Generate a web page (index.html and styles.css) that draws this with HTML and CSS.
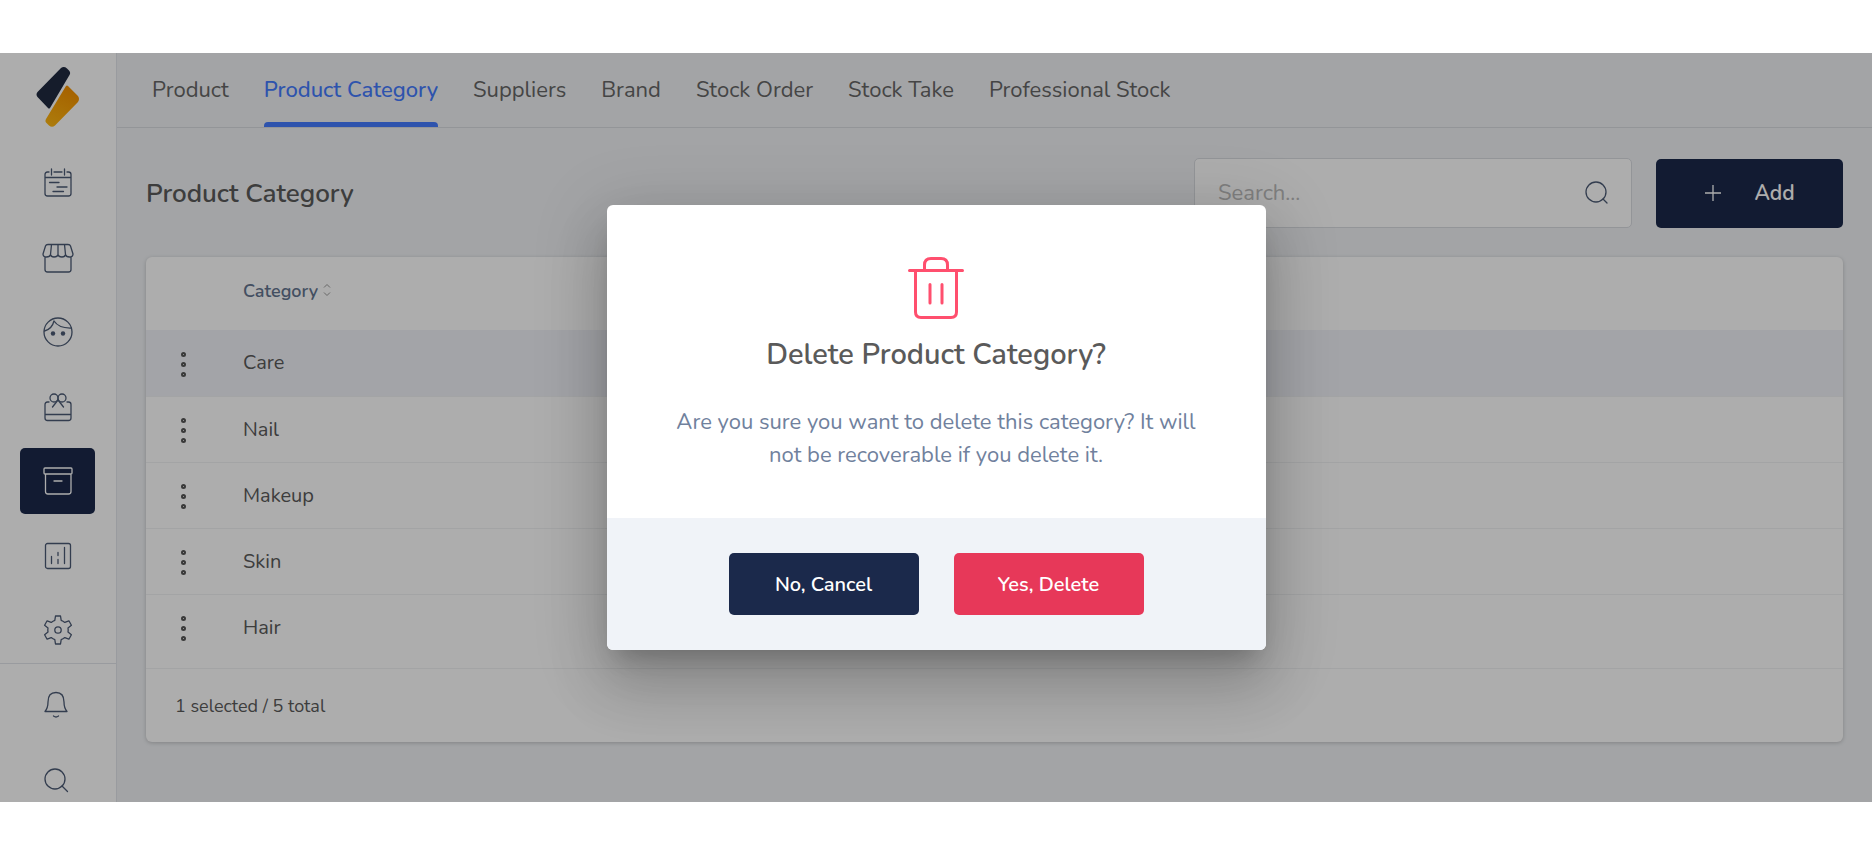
FILE: index.html
```html
<!DOCTYPE html>
<html lang="en">
<head>
    <meta charset="UTF-8">
    <meta name="viewport" content="width=device-width, initial-scale=1.0">
    <title>Product Category</title>
    <link rel="stylesheet" href="styles.css">
</head>
<body>
    <div class="app">
        <aside class="sidebar">
            <a href="#" class="logo" aria-label="Home">
                <svg width="44" height="62" viewBox="0 0 44 62">
                    <defs>
                        <linearGradient id="logoGold" x1="0" y1="1" x2="0.4" y2="0">
                            <stop offset="0" stop-color="#ffb914"/>
                            <stop offset="1" stop-color="#f59300"/>
                        </linearGradient>
                    </defs>
                    <path d="M25 2Q28 0 31 2.500L33 4.500Q35 6.500 33.500 9L14 42Q13 43 12 42L1.500 31Q-.5 28.500 1.500 26Z" fill="#1f2a40"/>
                    <path d="M30 20Q31 19 32 20L42 30Q44 33 42 36L19 59.500Q16 62 13 59.500L11 57.500Q8.500 55.500 10 53Z" fill="url(#logoGold)"/>
                </svg>
            </a>
            <nav class="side-nav" aria-label="Main">
                <a href="#" class="side-link" aria-label="Calendar">
                    <svg class="icon" width="30" height="30" viewBox="0 0 30 30">
                        <path d="M6 4H4.500Q2 4 2 6.500V25.500Q2 28 4.500 28H25.500Q28 28 28 25.500V6.500Q28 4 25.500 4H24M11 4H19M8.500 1V7M21.500 1V7M2 9.500H28M6.500 14.500H16M14 19H24M10 23.500H20.500"/>
                    </svg>
                </a>
                <a href="#" class="side-link" aria-label="Store">
                    <svg class="icon" width="32" height="30" viewBox="0 0 32 30">
                        <path d="M6 1.500H26Q28 1.500 28.500 3L31 11Q31 14 27.500 14Q24 14 23.500 11.500Q23 14 20 14Q16.500 14 16 11.500Q15.500 14 12 14Q9 14 8.500 11.500Q8 14 4.500 14Q1 14 1 11L3.500 3Q4 1.500 6 1.500ZM9.500 1.500L8.500 11.500M16 1.500V11.500M22.500 1.500L23.500 11.500M3 14V26.500Q3 29 5.500 29H26.500Q29 29 29 26.500V14"/>
                    </svg>
                </a>
                <a href="#" class="side-link" aria-label="Clients">
                    <svg class="icon" width="30" height="30" viewBox="0 0 30 30">
                        <circle cx="15" cy="15" r="14"/>
                        <path d="M1.500 14Q9 12 11 4Q16 11.500 28.500 11"/>
                        <circle class="dot" cx="10" cy="16.500" r="2.200"/>
                        <circle class="dot" cx="20" cy="16.500" r="2.200"/>
                    </svg>
                </a>
                <a href="#" class="side-link" aria-label="Gifts">
                    <svg class="icon" width="30" height="30" viewBox="0 0 30 30">
                        <path d="M6 10H4.500Q2 10 2 12.500V26Q2 28.500 4.500 28.500H25.500Q28 28.500 28 26V12.500Q28 10 25.500 10H24M2 22.500H28M15 8L9.500 15M15 8L20.500 15"/>
                        <circle cx="11" cy="6" r="4"/>
                        <circle cx="19" cy="6" r="4"/>
                    </svg>
                </a>
                <a href="#" class="side-link active" aria-label="Products" aria-current="page">
                    <svg class="icon" width="30" height="30" viewBox="0 0 30 30">
                        <path d="M2 2H28Q29 2 29 3V7Q29 8 28 8H2Q1 8 1 7V3Q1 2 2 2ZM2.500 8V25.500Q2.500 28 5 28H25.500Q28 28 28 25.500V8M11 15H19"/>
                    </svg>
                </a>
                <a href="#" class="side-link" aria-label="Reports">
                    <svg class="icon" width="30" height="30" viewBox="0 0 30 30">
                        <rect x="2.500" y="2.500" width="25" height="25" rx="2"/>
                        <path d="M8.500 15.500V22.500M15 11.500V14.500M15 18.500V22.500M21.500 6.500V22.500"/>
                    </svg>
                </a>
                <a href="#" class="side-link" aria-label="Settings">
                    <svg class="icon" width="30" height="30" viewBox="0 0 30 30">
                        <path d="M12.500 1H17.500L18.200 5.300Q20 6 21.800 7.400L25.900 5.800L28.400 10.200L25 12.900Q25.400 15 25 17.100L28.400 19.800L25.900 24.200L21.800 22.600Q20 24 18.200 24.700L17.500 29H12.500L11.800 24.700Q10 24 8.200 22.600L4.100 24.200L1.600 19.800L5 17.100Q4.600 15 5 12.900L1.600 10.200L4.100 5.800L8.200 7.400Q10 6 11.800 5.300Z"/>
                        <circle cx="15" cy="15" r="3.200"/>
                    </svg>
                </a>
            </nav>
            <div class="side-tools">
                <button type="button" class="side-btn" aria-label="Notifications">
                    <svg class="icon" width="26" height="30" viewBox="0 0 26 30">
                        <path d="M2 21.500Q5 18 5 12Q5 2.500 13 2.500Q21 2.500 21 12Q21 18 24 21.500ZM10.500 26Q13 28 15.500 26"/>
                    </svg>
                </button>
                <button type="button" class="side-btn" aria-label="Search">
                    <svg class="icon" width="26" height="26" viewBox="0 0 26 26">
                        <circle cx="12" cy="12" r="10"/>
                        <path d="M19 19L24.500 24.500"/>
                    </svg>
                </button>
            </div>
        </aside>

        <main class="main">
            <nav class="tabs" aria-label="Products">
                <a href="#" class="tab">Product</a>
                <a href="#" class="tab active" aria-current="page">Product Category</a>
                <a href="#" class="tab">Suppliers</a>
                <a href="#" class="tab">Brand</a>
                <a href="#" class="tab">Stock Order</a>
                <a href="#" class="tab">Stock Take</a>
                <a href="#" class="tab">Professional Stock</a>
            </nav>

            <div class="content">
                <div class="toolbar">
                    <h1>Product Category</h1>
                    <label class="search">
                        <input type="text" placeholder="Search..." aria-label="Search">
                        <svg class="icon" width="26" height="26" viewBox="0 0 26 26">
                            <circle cx="12" cy="12" r="10"/>
                            <path d="M19 19L23 23"/>
                        </svg>
                    </label>
                    <button type="button" class="btn btn-add">
                        <svg width="18" height="18" viewBox="0 0 18 18">
                            <path d="M9 1V17M1 9H17" stroke="currentColor" stroke-width="1.300"/>
                        </svg>
                        Add
                    </button>
                </div>

                <div class="card">
                    <table class="table">
                        <thead>
                            <tr>
                                <th class="col-menu"></th>
                                <th>
                                    Category<svg class="sort" width="8" height="14" viewBox="0 0 8 14">
                                        <path d="M1 4.500L4 1.500L7 4.500M1 9.500L4 12.500L7 9.500"/>
                                    </svg>
                                </th>
                            </tr>
                        </thead>
                        <tbody>
                            <tr class="selected">
                                <td class="col-menu"><button type="button" class="more" aria-label="Care options"><span></span><span></span><span></span></button></td>
                                <td>Care</td>
                            </tr>
                            <tr>
                                <td class="col-menu"><button type="button" class="more" aria-label="Nail options"><span></span><span></span><span></span></button></td>
                                <td>Nail</td>
                            </tr>
                            <tr>
                                <td class="col-menu"><button type="button" class="more" aria-label="Makeup options"><span></span><span></span><span></span></button></td>
                                <td>Makeup</td>
                            </tr>
                            <tr>
                                <td class="col-menu"><button type="button" class="more" aria-label="Skin options"><span></span><span></span><span></span></button></td>
                                <td>Skin</td>
                            </tr>
                            <tr>
                                <td class="col-menu"><button type="button" class="more" aria-label="Hair options"><span></span><span></span><span></span></button></td>
                                <td>Hair</td>
                            </tr>
                        </tbody>
                    </table>
                    <div class="card-footer">1 selected / 5 total</div>
                </div>
            </div>
        </main>

        <div class="overlay">
            <div class="modal" role="dialog" aria-modal="true" aria-labelledby="modalTitle">
                <div class="modal-body">
                    <svg class="trash" width="56" height="64" viewBox="0 0 56 64">
                        <path d="M1.500 14.500H54.500M16.500 14V9Q16.500 2.500 23 2.500H33Q39.500 2.500 39.500 9V14M7.500 14.500V56Q7.500 61.500 13 61.500H43Q48.500 61.500 48.500 56V14.500M22 28.500V47M34 28.500V47"/>
                    </svg>
                    <h2 id="modalTitle">Delete Product Category?</h2>
                    <p>Are you sure you want to delete this category? It will not be recoverable if you delete it.</p>
                </div>
                <div class="modal-footer">
                    <button type="button" class="btn btn-cancel">No, Cancel</button>
                    <button type="button" class="btn btn-delete">Yes, Delete</button>
                </div>
            </div>
        </div>
    </div>
</body>
</html>
```
FILE: styles.css
```css
* {
    box-sizing: border-box;
}

body {
    font-family: 'Nunito', 'Lato', sans-serif;
    margin: 0;
    padding: 53px 0;
    height: 100vh;
    background-color: #fff;
    color: #5a5a5a;
    font-size: 20px;
}

a {
    color: inherit;
    text-decoration: none;
}

button {
    font-family: inherit;
    border: none;
    background: none;
    padding: 0;
    cursor: pointer;
}

.app {
    position: relative;
    display: flex;
    height: 100%;
    overflow: hidden;
    background-color: #f0f2f5;
}

/* Sidebar */
.sidebar {
    display: flex;
    flex-direction: column;
    flex: none;
    width: 117px;
    background-color: #fff;
    border-right: 1px solid #e2e5ea;
}

.logo {
    display: flex;
    justify-content: center;
    flex: none;
    height: 97px;
    padding-top: 13px;
}

.side-nav {
    display: flex;
    flex-direction: column;
    justify-content: space-between;
    flex: none;
    height: 514px;
    border-bottom: 1px solid #e2e5ea;
}

.side-link {
    display: flex;
    align-items: center;
    justify-content: center;
    width: 75px;
    height: 66px;
    margin: 0 20px;
    border-radius: 5px;
}

.side-link.active {
    background-color: #1b294b;
    color: #fff;
}

.icon {
    fill: none;
    stroke: #4c5b75;
    stroke-width: 1.3px;
    stroke-linecap: round;
    stroke-linejoin: round;
}

.side-link.active .icon {
    stroke: #fff;
}

.icon .dot {
    fill: #4c5b75;
    stroke: none;
}

.side-tools {
    display: flex;
    flex-direction: column;
    gap: 10px;
    padding: 8px 5px 0 0;
}

.side-btn {
    display: flex;
    align-items: center;
    justify-content: center;
    height: 65px;
}

/* Tabs */
.main {
    flex: 1;
    min-width: 0;
}

.tabs {
    display: flex;
    gap: 35px;
    height: 75px;
    padding: 0 35px;
    border-bottom: 1px solid #d9dce1;
}

.tab {
    display: flex;
    align-items: center;
    height: 74px;
    font-size: 22px;
    color: #666;
}

.tab.active {
    position: relative;
    font-weight: 500;
    color: #447bff;
}

.tab.active::after {
    content: '';
    position: absolute;
    left: 0;
    right: 0;
    bottom: 0;
    height: 5px;
    border-radius: 4px 4px 0 0;
    background-color: #447bff;
}

/* Content */
.content {
    padding: 30px 29px 0;
}

.toolbar {
    display: flex;
    align-items: center;
    gap: 24px;
    margin-bottom: 29px;
}

.toolbar h1 {
    flex: 1;
    margin: 0;
    font-size: 26px;
    font-weight: 600;
    color: #5a5a5a;
}

.search {
    display: flex;
    align-items: center;
    width: 438px;
    height: 70px;
    padding: 0 21px 0 23px;
    background-color: #fff;
    border: 1px solid #d9dce1;
    border-radius: 5px;
}

.search input {
    flex: 1;
    min-width: 0;
    padding: 0;
    border: none;
    outline: none;
    background: none;
    font-family: inherit;
    font-size: 22px;
}

.search input::placeholder {
    color: #bbb;
}

.btn {
    display: flex;
    align-items: center;
    justify-content: center;
    border-radius: 5px;
    color: #fff;
    font-size: 20px;
    font-weight: 600;
}

.btn-add {
    gap: 32px;
    width: 187px;
    height: 69px;
    background-color: #1b294b;
    font-size: 21px;
}

.card {
    background-color: #fff;
    border-radius: 6px;
    box-shadow: 0 1px 4px rgba(0, 0, 0, 0.2);
}

.table {
    width: 100%;
    border-collapse: collapse;
}

.table th {
    height: 73px;
    padding: 0 0 6px;
    text-align: left;
    font-size: 18px;
    font-weight: 600;
    color: #647590;
}

.table td {
    height: 66px;
    padding: 0;
    border-bottom: 1px solid #f1f2f4;
}

.table .selected {
    background-color: #f0f2f8;
}

.table tr:last-child td {
    border-bottom: none;
}

.table .col-menu {
    width: 97px;
}

.sort {
    margin-left: 5px;
    fill: none;
    stroke: #999;
}

.more {
    display: flex;
    flex-direction: column;
    align-items: center;
    gap: 5px;
    width: 75px;
    padding-top: 3px;
}

.more span {
    width: 5px;
    height: 5px;
    border: 2px solid #555;
    border-radius: 50%;
}

.card-footer {
    display: flex;
    align-items: center;
    height: 74px;
    margin-top: 8px;
    padding: 0 29px;
    border-top: 1px solid #f1f2f4;
    font-size: 18px;
}

/* Delete dialog */
.overlay {
    position: absolute;
    inset: 0;
    display: flex;
    align-items: center;
    justify-content: center;
    background-color: rgba(0, 0, 0, 0.32);
}

.modal {
    width: 659px;
    border-radius: 6px;
    overflow: hidden;
    background-color: #fff;
    box-shadow: 0 16px 22px -10px rgba(0, 0, 0, 0.2), 0 36px 57px 4px rgba(0, 0, 0, 0.14), 0 13px 69px 12px rgba(0, 0, 0, 0.12);
}

.modal-body {
    padding: 51px 60px 46px;
    text-align: center;
}

.trash {
    display: block;
    margin: 0 auto;
    fill: none;
    stroke: #ff4f6e;
    stroke-width: 3px;
    stroke-linecap: round;
}

.modal-body h2 {
    margin: 16px 0 33px;
    font-size: 29px;
    line-height: 37px;
    font-weight: 600;
    color: #5a5a5a;
}

.modal-body p {
    margin: 0;
    font-size: 22px;
    line-height: 33px;
    color: #70819d;
}

.modal-footer {
    display: flex;
    justify-content: center;
    gap: 35px;
    padding: 35px;
    background-color: #f0f3f8;
}

.btn-cancel,
.btn-delete {
    width: 190px;
    height: 62px;
}

.btn-cancel {
    background-color: #1b294b;
}

.btn-delete {
    background-color: #e73859;
}
```
